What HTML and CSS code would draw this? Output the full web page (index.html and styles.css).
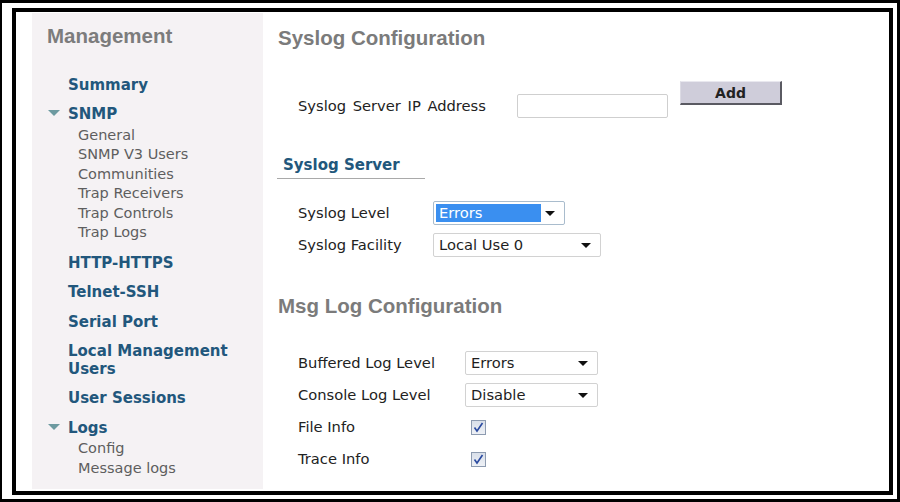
FILE: index.html
```html
<!DOCTYPE html>
<html>
<head>
<meta charset="utf-8">
<link rel="stylesheet" href="styles.css">
</head>
<body>
<div class="frame">
  <div class="inner">
    <aside class="sidebar">
      <h2 class="side-title">Management</h2>
      <ul class="nav">
        <li class="nav-item first">Summary</li>
        <li class="nav-item"><span class="caret"></span>SNMP</li>
        <li class="sub">
          <ul class="sub-list">
            <li>General</li>
            <li>SNMP V3 Users</li>
            <li>Communities</li>
            <li>Trap Receivers</li>
            <li>Trap Controls</li>
            <li>Trap Logs</li>
          </ul>
        </li>
        <li class="nav-item">HTTP-HTTPS</li>
        <li class="nav-item">Telnet-SSH</li>
        <li class="nav-item">Serial Port</li>
        <li class="nav-item">Local Management<br>Users</li>
        <li class="nav-item">User Sessions</li>
        <li class="nav-item"><span class="caret"></span>Logs</li>
        <li class="sub">
          <ul class="sub-list">
            <li>Config</li>
            <li>Message logs</li>
          </ul>
        </li>
      </ul>
    </aside>
    <main class="content">
      <h1 class="page-title">Syslog Configuration</h1>
      <div class="ip-row">
        <label class="label ip-label">Syslog Server IP Address</label>
        <input class="text-input" type="text">
        <button class="add-btn">Add</button>
      </div>
      <div class="subhead">Syslog Server</div>
      <div class="form-rows syslog-rows">
        <div class="row">
          <span class="label w135">Syslog Level</span>
          <div class="select focused w132"><span class="sel-text selected">Errors</span><span class="arrow"></span></div>
        </div>
        <div class="row">
          <span class="label w135">Syslog Facility</span>
          <div class="select w168"><span class="sel-text">Local Use 0</span><span class="arrow"></span></div>
        </div>
      </div>
      <h1 class="page-title msg-title">Msg Log Configuration</h1>
      <div class="form-rows msg-rows">
        <div class="row">
          <span class="label w167">Buffered Log Level</span>
          <div class="select w133"><span class="sel-text">Errors</span><span class="arrow"></span></div>
        </div>
        <div class="row">
          <span class="label w167">Console Log Level</span>
          <div class="select w133"><span class="sel-text">Disable</span><span class="arrow"></span></div>
        </div>
        <div class="row">
          <span class="label w167">File Info</span>
          <span class="checkbox"><svg viewBox="0 0 15 15" width="15" height="15"><path d="M3.5 7.5 L6 11 L11.5 3" fill="none" stroke="#2a4aa0" stroke-width="1.6"/></svg></span>
        </div>
        <div class="row">
          <span class="label w167">Trace Info</span>
          <span class="checkbox"><svg viewBox="0 0 15 15" width="15" height="15"><path d="M3.5 7.5 L6 11 L11.5 3" fill="none" stroke="#2a4aa0" stroke-width="1.6"/></svg></span>
        </div>
      </div>
    </main>
  </div>
</div>
</body>
</html>
```
FILE: styles.css
```css
* { box-sizing: border-box; }
html, body { margin: 0; padding: 0; background: #fff; }
body { width: 900px; height: 502px; overflow: hidden; font-family: "DejaVu Sans", Verdana, sans-serif; }

.frame {
  width: 900px;
  height: 502px;
  border: 3px solid #000;
  border-left-width: 2px;
  padding: 5px 4px 4px 10px;
  background: #fff;
}
.inner {
  height: 100%;
  border: 4px solid #000;
  padding: 1px 0 2px 16px;
  display: flex;
  background: #fff;
}

/* Sidebar */
.sidebar {
  width: 231px;
  background: #f5f2f4;
  padding: 11px 0 0 15px;
}
.side-title {
  margin: 0;
  font-family: "Liberation Sans", Arial, sans-serif;
  font-weight: bold;
  font-size: 20.5px;
  line-height: 24px;
  color: #7c7c7c;
}
.nav, .sub-list { list-style: none; margin: 0; padding: 0; }
.nav-item {
  margin-top: 11.4px;
  padding-left: 21px;
  font-weight: bold;
  font-size: 15px;
  line-height: 18px;
  color: #22577c;
}
.nav-item.first { margin-top: 28px; }
.caret {
  display: inline-block;
  width: 0;
  height: 0;
  margin-left: -20px;
  margin-right: 8px;
  vertical-align: 3px;
  border-left: 6px solid transparent;
  border-right: 6px solid transparent;
  border-top: 6px solid #6d9aa0;
}
.sub { margin-top: 2.6px; }
.sub-list li {
  padding-left: 31px;
  font-size: 14.5px;
  line-height: 19.4px;
  color: #5e5e5e;
}

/* Content */
.content {
  flex: 1;
  padding: 13px 0 0 15px;
  color: #222;
}
.page-title {
  margin: 0;
  font-family: "Liberation Sans", Arial, sans-serif;
  font-weight: bold;
  font-size: 20.5px;
  line-height: 24px;
  color: #7b7b7b;
}
.label {
  font-size: 14.7px;
  line-height: 24px;
  color: #222;
  white-space: nowrap;
}
.ip-row {
  display: flex;
  align-items: flex-start;
  margin-top: 31px;
  padding-left: 20px;
}
.ip-label { width: 219px; margin-top: 13px; word-spacing: 2px; }
.text-input {
  width: 151px;
  height: 24px;
  margin: 13px 0 0 0;
  padding: 0;
  border: 1px solid #cfcfcf;
  border-radius: 2px;
  background: #fff;
}
.add-btn {
  width: 102px;
  height: 24px;
  margin-left: 12px;
  padding: 0;
  background: #cfcdda;
  border-style: solid;
  border-width: 1px 2px 2px 1px;
  border-color: #e9e8ef #5a5a62 #5a5a62 #dcdbe4;
  font-family: "DejaVu Sans", Verdana, sans-serif;
  font-weight: bold;
  font-size: 14px;
  color: #222;
}
.subhead {
  width: 148px;
  margin-top: 38px;
  margin-left: -1px;
  padding: 0 0 4px 6px;
  border-bottom: 1px solid #a9a9a9;
  font-weight: bold;
  font-size: 15px;
  line-height: 18px;
  color: #22577c;
}
.form-rows {
  display: flex;
  flex-direction: column;
  gap: 8px;
  padding-left: 20px;
}
.syslog-rows { margin-top: 22px; }
.row {
  display: flex;
  align-items: center;
  height: 24px;
}
.w135 { width: 135px; }
.w167 { width: 167px; }
.w132 { width: 132px; }
.w133 { width: 133px; }
.w168 { width: 168px; }
.select {
  height: 24px;
  display: flex;
  align-items: center;
  justify-content: space-between;
  padding: 0 9px 0 5px;
  border: 1px solid #d2d2d2;
  border-radius: 2px;
  background: #fff;
  font-size: 14.7px;
  color: #1e1e1e;
}
.select.focused {
  border-color: #a9bccd;
  padding-left: 2px;
}
.sel-text { line-height: 18px; }
.sel-text.selected {
  background: #3a8ff0;
  color: #fff;
  width: 105px;
  padding-left: 3px;
}
.arrow {
  width: 0;
  height: 0;
  border-left: 5px solid transparent;
  border-right: 5px solid transparent;
  border-top: 5px solid #111;
}
.msg-title { margin-top: 37px; }
.msg-rows { margin-top: 33px; }
.checkbox {
  display: block;
  width: 15px;
  height: 15px;
  margin-left: 6px;
  border: 1px solid #8d9bb0;
  background: linear-gradient(#d9dfe9, #eef1f6);
}
.checkbox svg { display: block; margin: -1px 0 0 -1px; }
```
